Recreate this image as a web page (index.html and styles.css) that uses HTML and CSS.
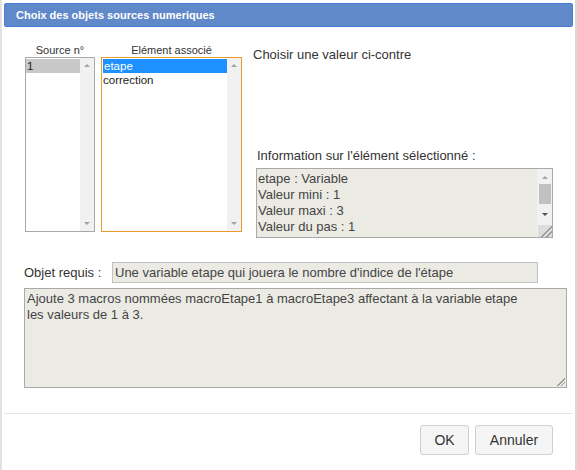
FILE: index.html
```html
<!DOCTYPE html>
<html lang="fr">
<head>
<meta charset="utf-8">
<title>Choix des objets sources numeriques</title>
<link rel="stylesheet" href="styles.css">
</head>
<body>
<div class="dialog">
  <div class="titlebar">Choix des objets sources numeriques</div>

  <div class="top">
    <div class="col col-source">
      <div class="col-label">Source n°</div>
      <div class="listbox">
        <div class="items">
          <div class="item item-inactive">1</div>
        </div>
        <div class="vscroll">
          <span class="arrow up light"></span>
          <span class="arrow down light"></span>
        </div>
      </div>
    </div>

    <div class="col col-elem">
      <div class="col-label">Elément associé</div>
      <div class="listbox focused">
        <div class="items">
          <div class="item item-active">etape</div>
          <div class="item">correction</div>
        </div>
        <div class="vscroll">
          <span class="arrow up light"></span>
          <span class="arrow down light"></span>
        </div>
      </div>
    </div>

    <div class="side">
      <div class="hint">Choisir une valeur ci-contre</div>
      <div class="info-label">Information sur l'élément sélectionné :</div>
      <div class="info-box">
        <div class="info-text">
          <div>etape : Variable</div>
          <div>Valeur mini : 1</div>
          <div>Valeur maxi : 3</div>
          <div>Valeur du pas : 1</div>
        </div>
        <div class="tscroll">
          <span class="arrow up light"></span>
          <span class="thumb"></span>
          <span class="arrow down dark"></span>
          <span class="grip"></span>
        </div>
      </div>
    </div>
  </div>

  <div class="required">
    <span class="req-label">Objet requis :</span>
    <div class="req-field">Une variable etape qui jouera le nombre d'indice de l'étape</div>
  </div>
  <div class="req-desc">
    Ajoute 3 macros nommées macroEtape1 à macroEtape3 affectant à la variable etape les valeurs de 1 à 3.
    <span class="grip"></span>
  </div>

  <div class="footer">
    <button class="btn btn-ok">OK</button>
    <button class="btn btn-cancel">Annuler</button>
  </div>
</div>
</body>
</html>
```

FILE: styles.css
```css
* { box-sizing: border-box; }

html, body {
  margin: 0;
  padding: 0;
  background: #fff;
}

body {
  font-family: "Liberation Sans", Arial, sans-serif;
  color: #333;
}

.dialog {
  width: 577px;
  height: 470px;
  border-left: 2px solid #e2e2e2;
  border-right: 2px solid #d9d9d9;
  display: flex;
  flex-direction: column;
}

/* blue title bar */
.titlebar {
  margin: 3px 2px 0 2px;
  height: 24px;
  background: #5f89c9;
  border: 1px solid #4a80dc;
  border-radius: 2px;
  color: #fff;
  font-weight: bold;
  font-size: 11px;
  line-height: 22px;
  padding-left: 11px;
}

/* lists + info column */
.top {
  display: flex;
  margin-top: 17px;
  padding-left: 23px;
}

.col { display: flex; flex-direction: column; }
.col-source { width: 70px; }
.col-elem { width: 141px; margin-left: 6px; }

.col-label {
  height: 13px;
  font-size: 11px;
  line-height: 13px;
  text-align: center;
  color: #333;
}

.listbox {
  height: 175px;
  border: 1px solid #a9a9a9;
  display: flex;
  background: #fff;
}
.listbox.focused { border-color: #e89c2c; }

.items {
  flex: 1;
  padding-top: 1px;
}

.item {
  height: 14px;
  font-size: 11.5px;
  line-height: 14px;
  padding-left: 1px;
  color: #222;
  white-space: nowrap;
}
.item-inactive { background: #c8c8c8; }
.item-active { background: #1e90ff; color: #fff; margin-left: 1px; }

.vscroll {
  width: 14px;
  background: #f1f1f1;
  position: relative;
}

.arrow {
  position: absolute;
  left: 50%;
  margin-left: -3px;
  width: 0;
  height: 0;
  border-left: 3px solid transparent;
  border-right: 3px solid transparent;
}
.arrow.up { top: 6px; border-bottom: 3px solid #a3a3a3; }
.arrow.down { bottom: 6px; border-top: 3px solid #a3a3a3; }
.arrow.dark.down { border-top-color: #505050; }

/* right-hand side */
.side {
  margin-left: 11px;
  flex: 1;
  display: flex;
  flex-direction: column;
}

.hint {
  margin-top: 3px;
  font-size: 13px;
  line-height: 15px;
  color: #333;
}

.info-label {
  margin-top: 86px;
  margin-left: 4px;
  font-size: 13px;
  line-height: 15px;
  color: #333;
}

.info-box {
  margin-top: 5px;
  margin-left: 3px;
  width: 297px;
  height: 70px;
  background: #ebebe4;
  border: 1px solid #a9a9a9;
  display: flex;
  overflow: hidden;
}

.info-text {
  flex: 1;
  padding: 2px 0 0 1px;
  font-size: 13px;
  line-height: 16px;
  color: #444;
}

.tscroll {
  width: 15px;
  background: #f1f1f1;
  position: relative;
}
.tscroll .arrow.up { top: 7px; }
.tscroll .arrow.down { bottom: 21px; }
.tscroll .thumb {
  position: absolute;
  left: 2px;
  right: 1px;
  top: 15px;
  height: 20px;
  background: #c1c1c1;
}

.grip {
  position: absolute;
  right: 1px;
  bottom: 1px;
  width: 9px;
  height: 9px;
  background:
    linear-gradient(135deg, transparent 0 55%, #999 55% 62%, transparent 62% 75%, #999 75% 82%, transparent 82%);
}
.tscroll .grip { background-color: #dcdcdc; right: 0; bottom: 0; width: 14px; height: 12px; }

/* required object */
.required {
  display: flex;
  align-items: center;
  margin-top: 24px;
  padding-left: 22px;
}

.req-label {
  font-size: 13px;
  line-height: 15px;
  color: #333;
  width: 88px;
}

.req-field {
  width: 426px;
  height: 21px;
  background: #ebebe4;
  border: 1px solid #c2c2c2;
  font-size: 13px;
  line-height: 19px;
  padding-left: 2px;
  color: #444;
  white-space: nowrap;
}

.req-desc {
  position: relative;
  margin: 5px 0 0 22px;
  width: 543px;
  height: 100px;
  background: #ebebe4;
  border: 1px solid #a9a9a9;
  font-size: 13px;
  line-height: 16px;
  padding: 2px 40px 0 2px;
  color: #444;
}

/* bottom buttons */
.footer {
  margin: 25px 2px 0 2px;
  border-top: 1px solid #e5e5e5;
  display: flex;
  justify-content: flex-end;
  gap: 6px;
  padding: 11px 20px 0 0;
}

.btn {
  height: 30px;
  background: #f5f5f5;
  border: 1px solid #cfcfcf;
  border-radius: 3px;
  font-family: "Liberation Sans", Arial, sans-serif;
  font-size: 14px;
  color: #333;
  padding: 0;
}
.btn-ok { width: 49px; }
.btn-cancel { width: 78px; }
```
